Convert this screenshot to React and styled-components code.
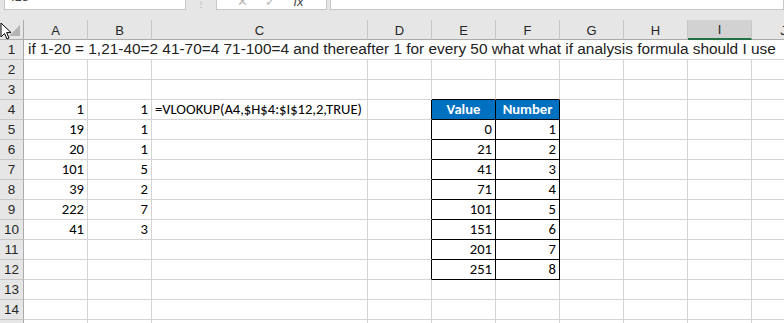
import React from 'react';
import styled, { createGlobalStyle, css } from 'styled-components';

const GlobalStyle = createGlobalStyle`
  html, body {
    margin: 0;
    padding: 0;
    background: #ffffff;
    overflow: hidden;
  }
  * { box-sizing: border-box; }
`;

const cols = [
  { key: 'A', w: 64 },
  { key: 'B', w: 64 },
  { key: 'C', w: 216 },
  { key: 'D', w: 64 },
  { key: 'E', w: 64 },
  { key: 'F', w: 64 },
  { key: 'G', w: 64 },
  { key: 'H', w: 64 },
  { key: 'I', w: 64 },
  { key: 'J', w: 64 },
];

const cellFont = `Carlito, Lato, "Liberation Sans", sans-serif`;

const Window = styled.div`
  width: 784px;
  height: 323px;
  background: #e6e6e6;
  overflow: hidden;
  position: relative;
`;

const FormulaBar = styled.div`
  height: 20px;
  display: flex;
  align-items: flex-start;
  overflow: hidden;
  background: #e6e6e6;
`;

const Box = styled.div`
  height: 24px;
  margin-top: -14px;
  background: #ffffff;
  border: 1px solid #c6c6c6;
  display: flex;
  align-items: flex-end;
  font-family: "Liberation Sans", sans-serif;
  font-size: 13px;
  color: #444;
  overflow: hidden;
`;

const NameBox = styled(Box)`
  margin-left: 4px;
  width: 182px;
  padding: 0 0 1px 6px;
  line-height: 22px;
`;

const Dots = styled.div`
  width: 30px;
  display: flex;
  justify-content: center;
  padding-top: 1px;
  color: #9a9a9a;
  font-size: 8px;
  line-height: 8px;
`;

const FxBox = styled(Box)`
  width: 111px;
  justify-content: space-around;
  padding: 0 14px 0 12px;
  color: #b8b8b8;
`;

const FxLabel = styled.span`
  font-style: italic;
  color: #444;
`;

const FormulaBox = styled(Box)`
  margin-left: 3px;
  flex: 1;
`;

const Sheet = styled.div`
  display: grid;
  grid-template-columns: 24px ${cols.map((c) => c.w + 'px').join(' ')};
  grid-auto-rows: 20px;
  background: #ffffff;
  width: max-content;
`;

const Corner = styled.div`
  background: #e6e6e6;
  border-right: 1px solid #ababab;
  border-bottom: 1px solid #ababab;
  position: relative;
  &::after {
    content: '';
    position: absolute;
    right: 3px;
    bottom: 3px;
    width: 0;
    height: 0;
    border-left: 11px solid transparent;
    border-bottom: 11px solid #b4b4b4;
  }
`;

const ColHead = styled.div`
  background: ${(p) => (p.selected ? '#d2d2d2' : '#e6e6e6')};
  border-right: 1px solid #c6c6c6;
  border-bottom: ${(p) => (p.selected ? '2px solid #217346' : '1px solid #ababab')};
  display: flex;
  align-items: center;
  justify-content: center;
  font-family: "Liberation Sans", sans-serif;
  font-size: 13px;
  color: #262626;
  padding-top: 1px;
`;

const RowHead = styled.div`
  background: #e6e6e6;
  border-right: 1px solid #ababab;
  border-bottom: 1px solid #c6c6c6;
  display: flex;
  align-items: center;
  justify-content: center;
  font-family: "Liberation Sans", sans-serif;
  font-size: 13.5px;
  color: #262626;
`;

const Cell = styled.div`
  border-right: 1px solid ${(p) => (p.edgeRight ? '#000' : '#d4d4d4')};
  border-bottom: 1px solid ${(p) => (p.edgeBottom ? '#000' : '#d4d4d4')};
  font-family: ${cellFont};
  font-size: 14.6px;
  color: #000;
  display: flex;
  align-items: flex-end;
  padding: 0 3px 1px 3px;
  white-space: nowrap;
  justify-content: ${(p) => (p.num ? 'flex-end' : 'flex-start')};
  ${(p) =>
    p.table &&
    css`
      border-right-color: #000;
      border-bottom-color: #000;
    `}
  ${(p) =>
    p.head &&
    css`
      background: #0070c0;
      color: #ffffff;
      font-weight: bold;
      justify-content: center;
    `}
`;

const TitleCell = styled(Cell)`
  grid-column: 2 / -1;
  overflow: hidden;
  font-family: "Liberation Sans", sans-serif;
  font-size: 15.4px;
  color: #222;
  padding-left: 4px;
  align-items: center;
  border-right: none;
`;

const Pointer = styled.svg`
  position: absolute;
  left: 0;
  top: 22px;
`;

const dataA = { 4: 1, 5: 19, 6: 20, 7: 101, 8: 39, 9: 222, 10: 41 };
const dataB = { 4: 1, 5: 1, 6: 1, 7: 5, 8: 2, 9: 7, 10: 3 };
const lookup = [
  [0, 1],
  [21, 2],
  [41, 3],
  [71, 4],
  [101, 5],
  [151, 6],
  [201, 7],
  [251, 8],
];

function renderRow(r) {
  const cells = [];
  cols.forEach((c) => {
    const k = c.key + r;
    if (c.key === 'A' && dataA[r] !== undefined) {
      cells.push(<Cell key={k} num>{dataA[r]}</Cell>);
    } else if (c.key === 'B' && dataB[r] !== undefined) {
      cells.push(<Cell key={k} num>{dataB[r]}</Cell>);
    } else if (c.key === 'C' && r === 4) {
      cells.push(<Cell key={k}>=VLOOKUP(A4,$H$4:$I$12,2,TRUE)</Cell>);
    } else if (c.key === 'D') {
      cells.push(<Cell key={k} edgeRight={r >= 4 && r <= 12} />);
    } else if ((c.key === 'E' || c.key === 'F') && r === 3) {
      cells.push(<Cell key={k} edgeBottom />);
    } else if ((c.key === 'E' || c.key === 'F') && r === 4) {
      cells.push(
        <Cell key={k} table head>
          {c.key === 'E' ? 'Value' : 'Number'}
        </Cell>
      );
    } else if ((c.key === 'E' || c.key === 'F') && r >= 5 && r <= 12) {
      const row = lookup[r - 5];
      cells.push(
        <Cell key={k} table num>
          {c.key === 'E' ? row[0] : row[1]}
        </Cell>
      );
    } else {
      cells.push(<Cell key={k} />);
    }
  });
  return cells;
}

export default function App() {
  const rows = [];
  for (let r = 2; r <= 15; r++) rows.push(r);

  return (
    <Window>
      <GlobalStyle />
      <FormulaBar>
        <NameBox>I18</NameBox>
        <Dots>⋮</Dots>
        <FxBox>
          <span>✕</span>
          <span>✓</span>
          <FxLabel>fx</FxLabel>
        </FxBox>
        <FormulaBox />
      </FormulaBar>
      <Sheet>
        <Corner />
        {cols.map((c) => (
          <ColHead key={c.key} selected={c.key === 'I'}>
            {c.key}
          </ColHead>
        ))}
        <RowHead>1</RowHead>
        <TitleCell>
          if 1-20 = 1,21-40=2 41-70=4 71-100=4 and thereafter 1 for every 50 what what if analysis formula should I use
        </TitleCell>
        {rows.map((r) => (
          <React.Fragment key={r}>
            <RowHead>{r}</RowHead>
            {renderRow(r)}
          </React.Fragment>
        ))}
      </Sheet>
      <Pointer width="12" height="18" viewBox="0 0 12 18">
        <path d="M1 1 L1 15 L4.5 11.5 L7 17 L9 16 L6.6 10.6 L11 10.6 Z" fill="#fff" stroke="#000" strokeWidth="1" />
      </Pointer>
    </Window>
  );
}
